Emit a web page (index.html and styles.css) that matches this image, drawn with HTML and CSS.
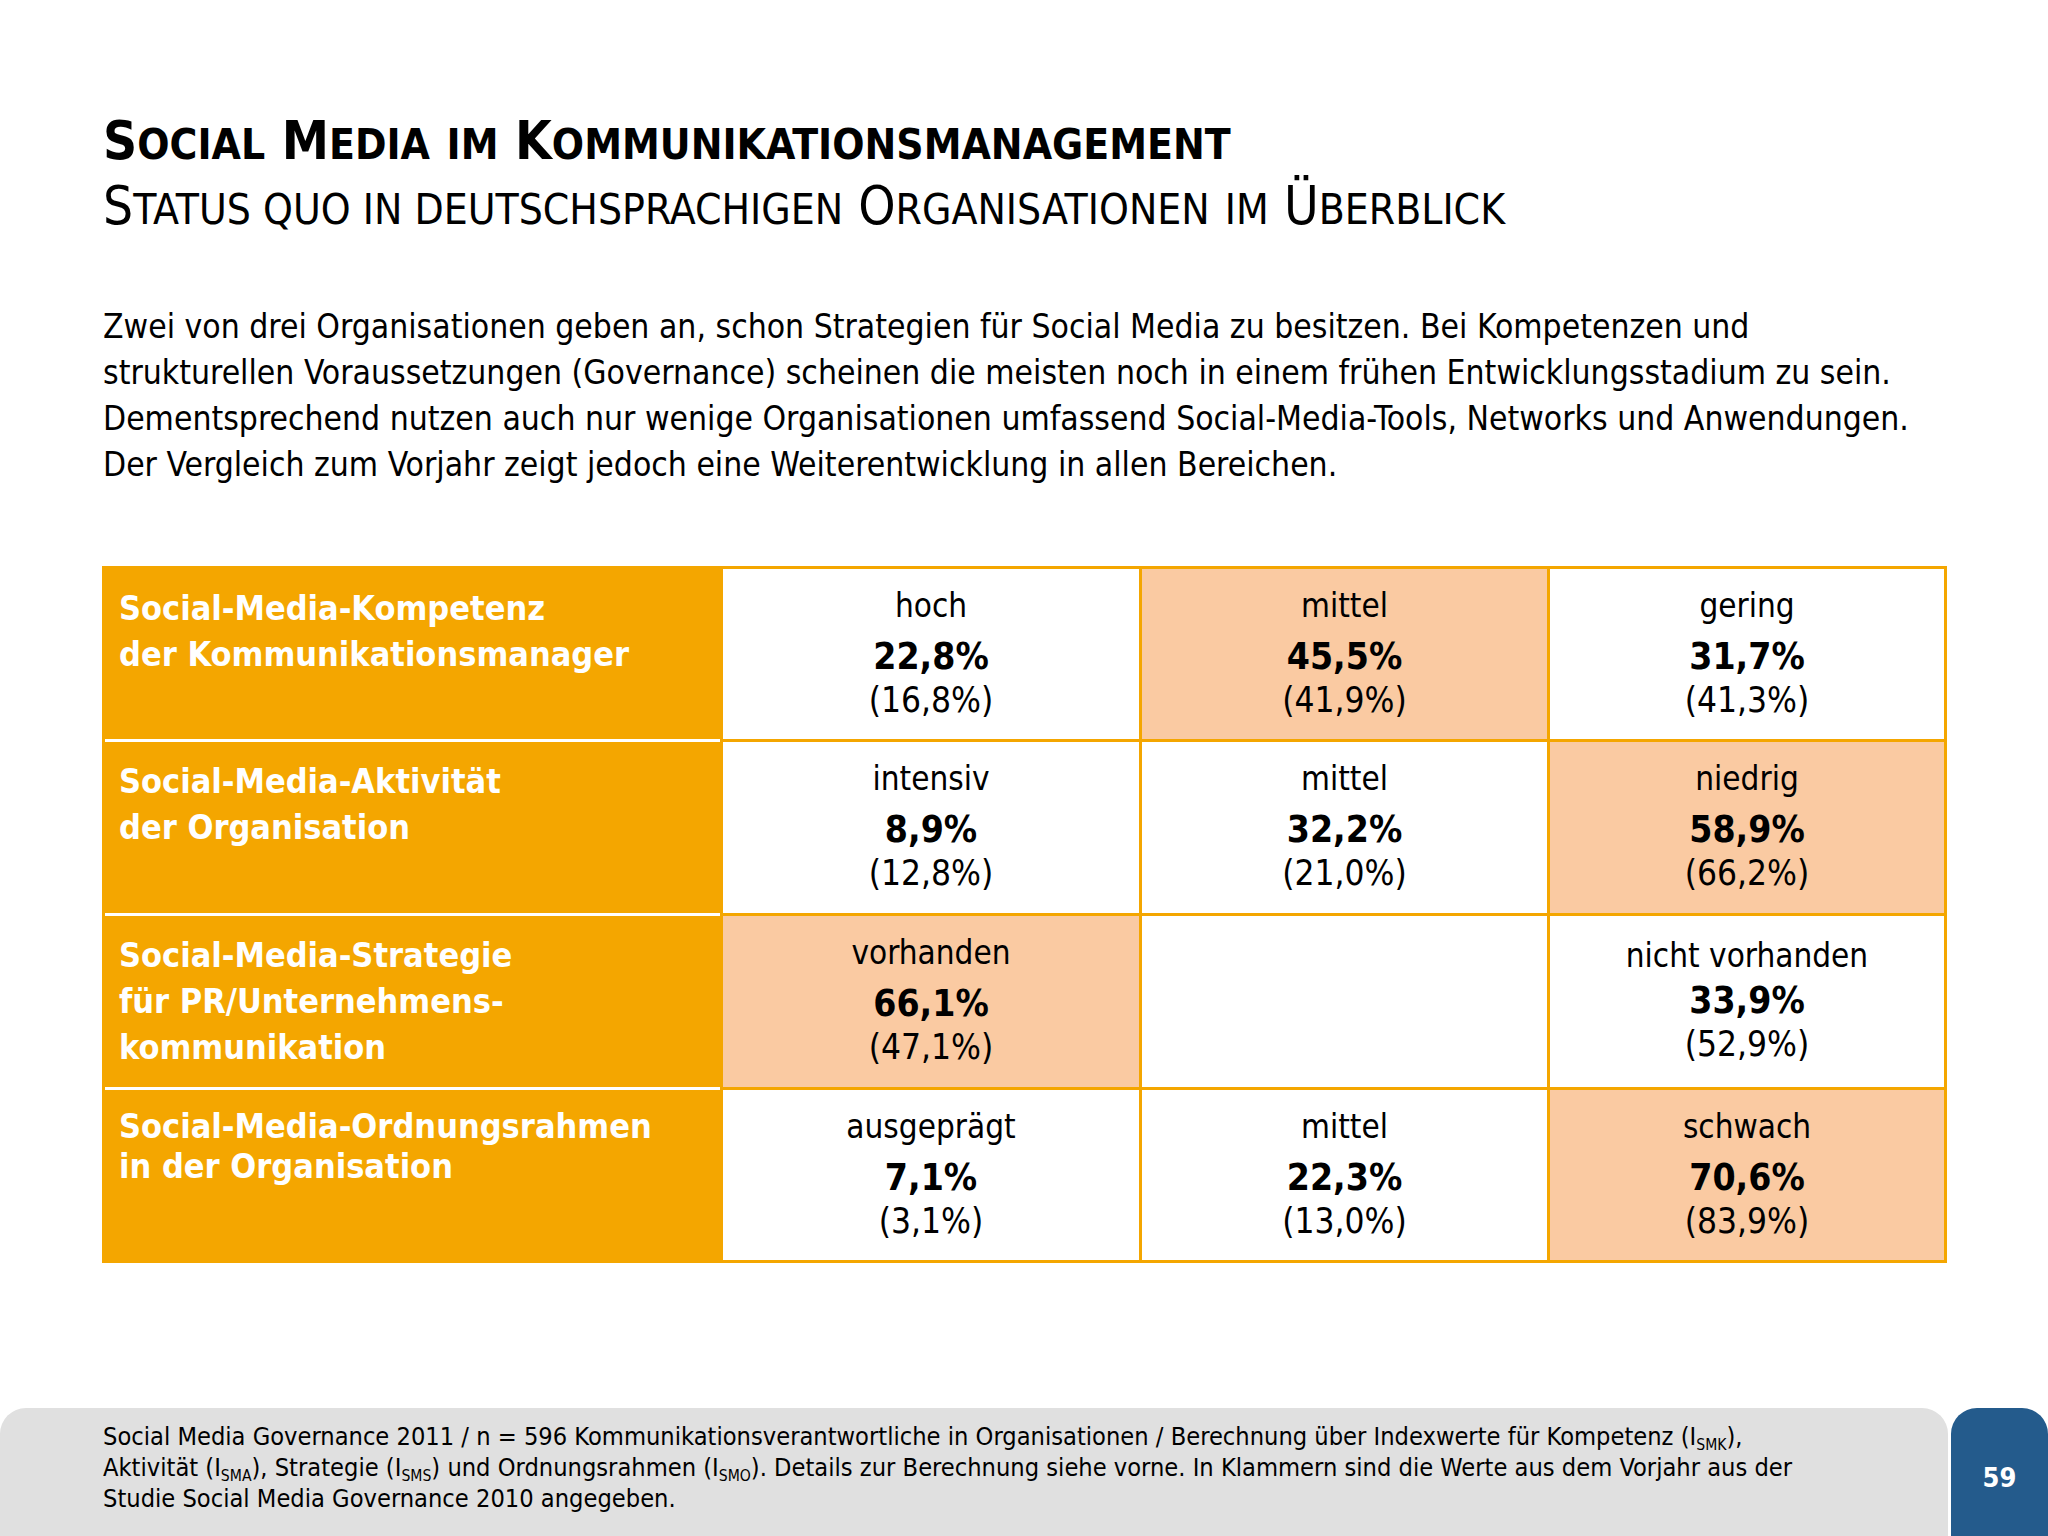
FILE: index.html
```html
<!DOCTYPE html>
<html lang="de">
<head>
<meta charset="utf-8">
<title>Social Media im Kommunikationsmanagement</title>
<link rel="stylesheet" href="styles.css">
</head>
<body>
<div class="page">
  <h1 class="title">
    <span class="t1">S<span class="sc">ocial</span> M<span class="sc">edia</span> <span class="sc">im</span> K<span class="sc">ommunikationsmanagement</span></span>
    <span class="t2">S<span class="sc">tatus quo in deutschsprachigen</span> O<span class="sc">rganisationen</span> <span class="sc">im</span> Ü<span class="sc">berblick</span></span>
  </h1>

  <p class="intro">Zwei von drei Organisationen geben an, schon Strategien für Social Media zu besitzen. Bei Kompetenzen und<br>strukturellen Voraussetzungen (Governance) scheinen die meisten noch in einem frühen Entwicklungsstadium zu sein.<br>Dementsprechend nutzen auch nur wenige Organisationen umfassend Social-Media-Tools, Networks und Anwendungen.<br>Der Vergleich zum Vorjahr zeigt jedoch eine Weiterentwicklung in allen Bereichen.</p>

  <div class="grid">
    <div class="hd first">Social-Media-Kompetenz<br>der Kommunikationsmanager</div>
    <div class="cell first"><div class="lbl">hoch</div><div class="val">22,8%</div><div class="prev">(16,8%)</div></div>
    <div class="cell first hi"><div class="lbl">mittel</div><div class="val">45,5%</div><div class="prev">(41,9%)</div></div>
    <div class="cell first"><div class="lbl">gering</div><div class="val">31,7%</div><div class="prev">(41,3%)</div></div>

    <div class="hd">Social-Media-Aktivität<br>der Organisation</div>
    <div class="cell"><div class="lbl">intensiv</div><div class="val">8,9%</div><div class="prev">(12,8%)</div></div>
    <div class="cell"><div class="lbl">mittel</div><div class="val">32,2%</div><div class="prev">(21,0%)</div></div>
    <div class="cell hi"><div class="lbl">niedrig</div><div class="val">58,9%</div><div class="prev">(66,2%)</div></div>

    <div class="hd">Social-Media-Strategie<br>für PR/Unternehmens-<br>kommunikation</div>
    <div class="cell hi"><div class="lbl">vorhanden</div><div class="val">66,1%</div><div class="prev">(47,1%)</div></div>
    <div class="cell"></div>
    <div class="cell alt"><div class="lbl">nicht vorhanden</div><div class="val">33,9%</div><div class="prev">(52,9%)</div></div>

    <div class="hd tight">Social-Media-Ordnungsrahmen<br>in der Organisation</div>
    <div class="cell"><div class="lbl">ausgeprägt</div><div class="val">7,1%</div><div class="prev">(3,1%)</div></div>
    <div class="cell"><div class="lbl">mittel</div><div class="val">22,3%</div><div class="prev">(13,0%)</div></div>
    <div class="cell hi"><div class="lbl">schwach</div><div class="val">70,6%</div><div class="prev">(83,9%)</div></div>
  </div>

  <footer class="footer">
    <div class="note">Social Media Governance 2011 / n = 596 Kommunikationsverantwortliche in Organisationen / Berechnung über Indexwerte für Kompetenz (I<sub>SMK</sub>),<br>Aktivität (I<sub>SMA</sub>), Strategie (I<sub>SMS</sub>) und Ordnungsrahmen (I<sub>SMO</sub>). Details zur Berechnung siehe vorne. In Klammern sind die Werte aus dem Vorjahr aus der<br>Studie Social Media Governance 2010 angegeben.</div>
    <div class="pagenum">59</div>
  </footer>
</div>
</body>
</html>
```
FILE: styles.css
```css
html, body {
  margin: 0;
  padding: 0;
  background: #fff;
}
body {
  font-family: "DejaVu Sans Condensed", "DejaVu Sans", sans-serif;
  font-stretch: semi-condensed;
  color: #000;
}
.page {
  display: flex;
  flex-direction: column;
  min-height: 1536px;
  box-sizing: border-box;
  padding-top: 110px;
}
.title {
  margin: 0 0 0 103px;
  font-size: 52.8px;
  line-height: 61px;
  font-weight: normal;
}
.title .t1, .title .t2 {
  display: block;
  white-space: nowrap;
}
.title .t1 { font-weight: bold; }
.title .sc {
  text-transform: uppercase;
  font-size: 0.8em;
}
.intro {
  margin: 64px 0 0 103px;
  font-size: 33.4px;
  line-height: 46px;
  white-space: nowrap;
}
.grid {
  margin: 78px 0 0 102px;
  width: 1845px;
  box-sizing: border-box;
  border: 3px solid #f4a600;
  display: grid;
  grid-template-columns: 615px 419px 408px 397px;
  grid-template-rows: 170px 174px 174px 173px;
}
.hd {
  background: #f4a600;
  color: #fff;
  font-weight: bold;
  font-size: 34px;
  line-height: 46px;
  padding: 16px 0 0 14px;
  border-top: 3px solid #fff;
  white-space: nowrap;
}
.hd.first { border-top: 0; }
.hd.tight { line-height: 40px; }
.cell {
  background: #fff;
  border-left: 3px solid #f4a600;
  border-top: 3px solid #f4a600;
  text-align: center;
  padding-top: 15px;
  white-space: nowrap;
}
.cell.first { border-top: 0; }
.cell.hi { background: #facaa2; }
.lbl {
  font-size: 33px;
  line-height: 44px;
  margin-bottom: 8px;
}
.val {
  font-size: 37px;
  font-weight: bold;
  line-height: 42px;
}
.prev {
  font-size: 35px;
  line-height: 44px;
}
.cell.alt .lbl { margin-top: 3px; margin-bottom: 2px; }
.footer {
  margin-top: auto;
  height: 128px;
  display: flex;
  gap: 3px;
}
.note {
  flex: 0 0 1948px;
  box-sizing: border-box;
  background: #e0e0e0;
  border-radius: 26px 26px 0 0;
  padding: 13px 0 0 103px;
  font-size: 25.2px;
  line-height: 31px;
  white-space: nowrap;
}
.note sub {
  font-size: 0.62em;
  line-height: 0;
  vertical-align: -0.3em;
}
.pagenum {
  flex: 1;
  background: #245b8c;
  border-radius: 26px 26px 0 0;
  color: #fff;
  font-weight: bold;
  font-size: 27px;
  text-align: center;
  padding-top: 54px;
  box-sizing: border-box;
}
```
